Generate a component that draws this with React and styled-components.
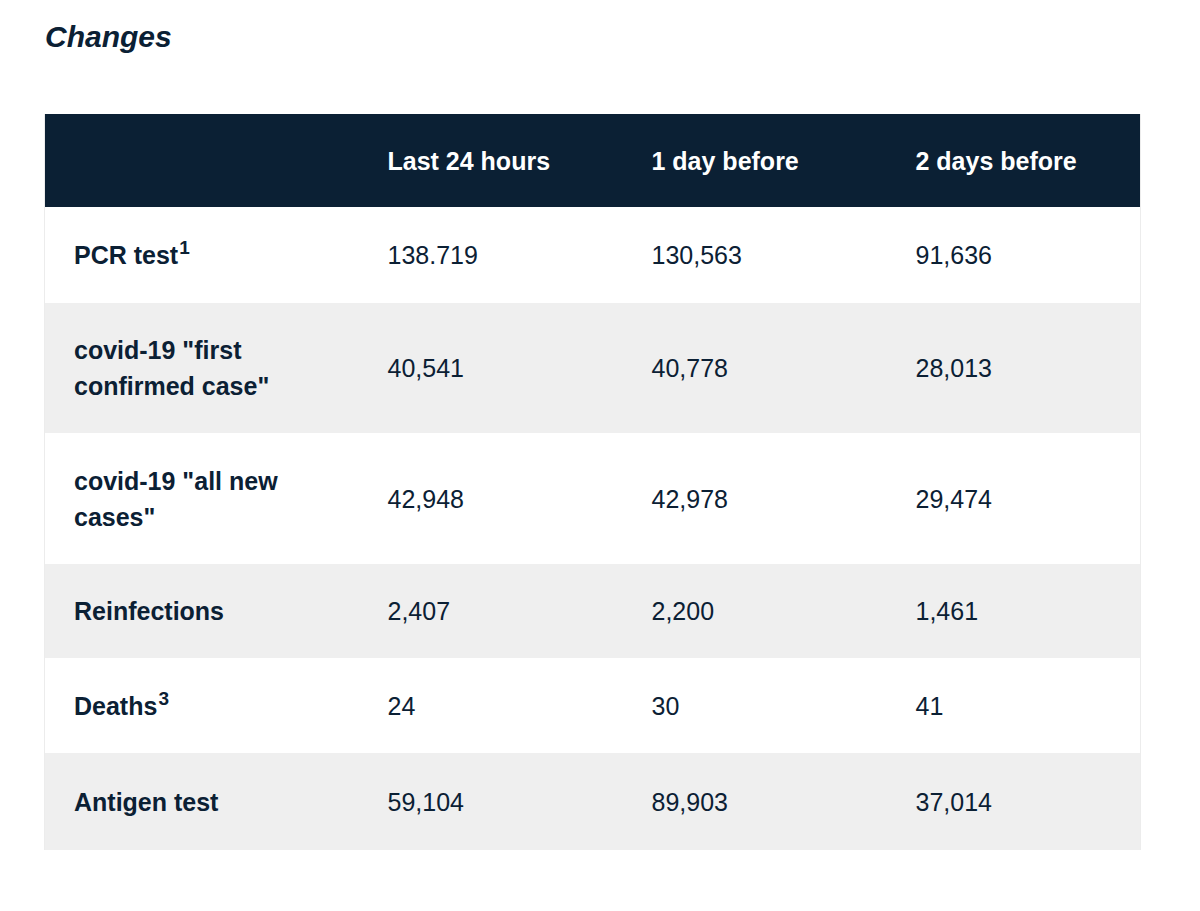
import React from "react";
import styled, { createGlobalStyle } from "styled-components";

const Global = createGlobalStyle`
  html, body { margin: 0; padding: 0; background: #ffffff; }
  body { font-family: "Liberation Sans", Arial, sans-serif; color: #0b2034; }
`;

const Page = styled.div`
  padding: 19px 0 40px 44px;
  width: 1097px;
`;

const Title = styled.h2`
  margin: 0 0 59px 1px;
  font-size: 30px;
  line-height: 36px;
  font-weight: 700;
  font-style: italic;
  color: #0b2034;
`;

const Table = styled.table`
  width: 1097px;
  border-collapse: collapse;
  table-layout: fixed;
  border-left: 1px solid #ececec;
  border-right: 1px solid #ececec;
`;

const HeadRow = styled.tr`
  background: #0b2034;
`;

const Th = styled.th`
  height: 93px;
  padding: 0 0 0 29px;
  text-align: left;
  font-size: 25px;
  line-height: 36px;
  font-weight: 700;
  color: #ffffff;
  vertical-align: middle;
`;

const Row = styled.tr`
  background: ${(p) => (p.$shade ? "#efefef" : "#ffffff")};
`;

const Cell = styled.td`
  padding: ${(p) => p.$pad}px 20px ${(p) => p.$pad}px 29px;
  font-size: 25px;
  line-height: 36px;
  font-weight: ${(p) => (p.$bold ? 700 : 400)};
  color: #0b2034;
  vertical-align: middle;
`;

const Sup = styled.sup`
  font-size: 19px;
  line-height: 0;
  vertical-align: 10px;
  margin-left: 1px;
`;

const rows = [
  { label: <>PCR test<Sup>1</Sup></>, v: ["138.719", "130,563", "91,636"], pad: 30 },
  { label: <>covid-19 "first confirmed case"</>, v: ["40,541", "40,778", "28,013"], pad: 29 },
  { label: <>covid-19 "all new cases"</>, v: ["42,948", "42,978", "29,474"], pad: 29.5 },
  { label: <>Reinfections</>, v: ["2,407", "2,200", "1,461"], pad: 29 },
  { label: <>Deaths<Sup>3</Sup></>, v: ["24", "30", "41"], pad: 29.5 },
  { label: <>Antigen test</>, v: ["59,104", "89,903", "37,014"], pad: 30.5 },
];

export default function App() {
  return (
    <>
      <Global />
      <Page>
        <Title>Changes</Title>
        <Table>
          <colgroup>
            <col style={{ width: 314 }} />
            <col style={{ width: 264 }} />
            <col style={{ width: 264 }} />
            <col />
          </colgroup>
          <thead>
            <HeadRow>
              <Th></Th>
              <Th>Last 24 hours</Th>
              <Th>1 day before</Th>
              <Th>2 days before</Th>
            </HeadRow>
          </thead>
          <tbody>
            {rows.map((r, i) => (
              <Row key={i} $shade={i % 2 === 1}>
                <Cell $bold $pad={r.pad}>{r.label}</Cell>
                {r.v.map((x, j) => (
                  <Cell key={j} $pad={r.pad}>{x}</Cell>
                ))}
              </Row>
            ))}
          </tbody>
        </Table>
      </Page>
    </>
  );
}
